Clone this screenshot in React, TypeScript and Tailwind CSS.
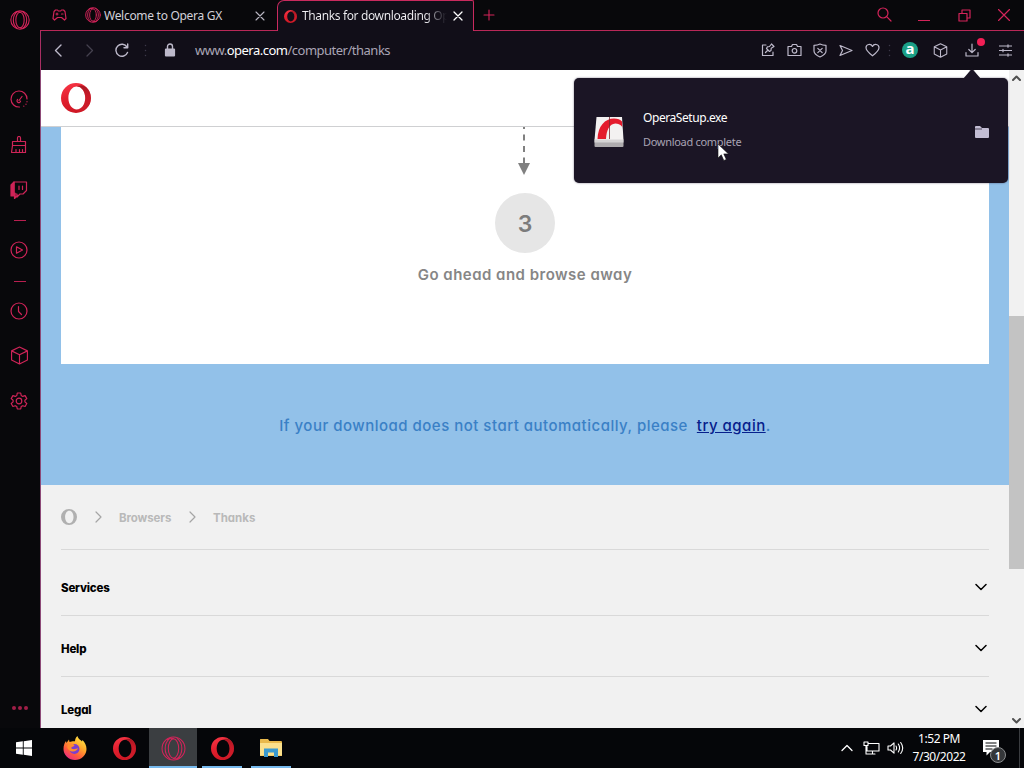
import React from "react";

type IconProps = { w?: number; h?: number; vb?: string; sw?: number; className?: string; children: React.ReactNode };

function Icon({ w = 18, h, vb, sw = 1.2, className = "", children }: IconProps) {
  const hh = h ?? w;
  return (
    <svg
      width={w}
      height={hh}
      viewBox={vb ?? `0 0 ${w} ${hh}`}
      fill="none"
      stroke="currentColor"
      strokeWidth={sw}
      strokeLinecap="round"
      strokeLinejoin="round"
      className={`block shrink-0 ${className}`}
    >
      {children}
    </svg>
  );
}

function Cell({ className, children }: { className: string; children?: React.ReactNode }) {
  return <div className={`flex shrink-0 items-center justify-center ${className}`}>{children}</div>;
}

function OperaLogo({ size, id }: { size: number; id: string }) {
  return (
    <svg width={size} height={size} viewBox="0 0 30 30" className="block shrink-0">
      <defs>
        <linearGradient id={id} x1="0" y1="0" x2="0.35" y2="1">
          <stop offset="0" stopColor="#fb3a4a" />
          <stop offset="0.5" stopColor="#e3202f" />
          <stop offset="1" stopColor="#cf1724" />
        </linearGradient>
        <linearGradient id={`${id}Shade`} x1="0" y1="0" x2="0" y2="1">
          <stop offset="0" stopColor="#8f1019" stopOpacity="0.75" />
          <stop offset="0.45" stopColor="#a81522" stopOpacity="0.35" />
          <stop offset="1" stopColor="#d42a38" stopOpacity="0.3" />
        </linearGradient>
      </defs>
      <path
        fillRule="evenodd"
        fill={`url(#${id})`}
        d="M15 0a15 15 0 1 0 0 30a15 15 0 1 0 0-30zM15.800 3.600c4.700 0 8.400 4.900 8.400 11.400s-3.700 11.400-8.400 11.400s-8.400-4.900-8.400-11.400s3.700-11.400 8.400-11.400z"
      />
      <path
        fill={`url(#${id}Shade)`}
        d="M15.800 3.600c2.500-1.900 6.300-1.400 9.200.4c6.700 6.300 6.700 16 0 22c-3 2-6.700 2.300-9.200.4c4.700 0 8.400-4.900 8.400-11.400s-3.700-11.400-8.400-11.400z"
      />
    </svg>
  );
}

function GxLogo({ size, sw = 1 }: { size: number; sw?: number }) {
  return (
    <Icon w={size} vb="0 0 24 24" sw={sw} className="text-[#d4245a]">
      <circle cx="12" cy="12" r="11" />
      <ellipse cx="12" cy="12" rx="5" ry="9.300" />
      <path d="M8.500 2.200C5.500 4.500 4 8 4 12s1.500 7.500 4.500 9.800M15.500 2.200C18.500 4.500 20 8 20 12s-1.500 7.500-4.500 9.800M12 2.700c-2-1-4-.8-6 .5M12 21.300c2 1 4 .8 6-.5" />
    </Icon>
  );
}

function Cube({ size, sw = 1.1 }: { size: number; sw?: number }) {
  return (
    <Icon w={size} vb="0 0 18 18" sw={sw}>
      <path d="M9 1l7.500 3.600v8.600L9 17l-7.500-3.800V4.600zM1.500 4.600L9 8.300l7.500-3.700M9 8.300V17" />
    </Icon>
  );
}

function Dots() {
  return (
    <Icon w={3} h={13} vb="0 0 3 13">
      <path d="M1.500 1.500v.1M1.500 6.500v.1M1.500 11.500v.1" stroke="#3c3849" strokeWidth="1.500" />
    </Icon>
  );
}

function Sidebar() {
  return (
    <aside className="flex w-10 shrink-0 flex-col items-stretch bg-[#08080b] pr-[2px] text-[#cf2458]">
      <Cell className="h-10 pl-px"><GxLogo size={20} sw={1.3} /></Cell>
      <Cell className="mt-[36px] h-[45px]">
        <Icon w={18}>
          <path d="M9.500 17A8 8 0 1 1 17 9M9 10.500l3-4M7.600 9.500a1.800 1.800 0 1 0 3 1.500M17 11.500v.3M16 14v.3M13.800 16v.2" />
        </Icon>
      </Cell>
      <Cell className="h-[47px]">
        <Icon w={18}>
          <path d="M2.500 5.500h13v4h-13zM2.500 9.500l-1 7h14l0-7M7.500 5.500v-3.500a1.500 1.500 0 0 1 3 0v3.500M6 16.500v-3M9.500 16.500v-3M12.500 16.500v-3" />
        </Icon>
      </Cell>
      <Cell className="h-[44px]">
        <Icon w={18}>
          <path d="M4 1L1 4v11h3.500v2.500L7 15H5V12H4z" fill="currentColor" />
          <path d="M4 1h12.500v8.500L13 13h-3l-3 3v-3H4zM9 5v3.500M12.500 5v3.500" />
        </Icon>
      </Cell>
      <Cell className="h-4 pl-px"><span className="h-px w-3 bg-[#b91f50]" /></Cell>
      <Cell className="h-[44px]">
        <Icon w={18}>
          <circle cx="9" cy="9" r="8" />
          <path d="M6.500 5.800v6.400l6-3.200z" />
        </Icon>
      </Cell>
      <Cell className="mt-px h-4 pl-px"><span className="h-px w-3 bg-[#b91f50]" /></Cell>
      <Cell className="h-[44px]">
        <Icon w={18}>
          <circle cx="9" cy="9" r="8" />
          <path d="M8.500 4.500v5l3 3" />
        </Icon>
      </Cell>
      <Cell className="h-[45px]"><Cube size={19} /></Cell>
      <Cell className="h-[46px]">
        <Icon w={18}>
          <circle cx="9" cy="9" r="2.800" />
          <path d="M7.300 1h3.400l.5 2.500 1.500.9 2.400-.8 1.700 3-1.900 1.600v1.700l1.900 1.600-1.700 3-2.400-.8-1.500.9-.5 2.400H7.300l-.5-2.400-1.500-.9-2.400.8-1.700-3 1.900-1.600V8.200L1.200 6.600l1.700-3 2.400.8 1.500-.9z" />
        </Icon>
      </Cell>
      <div className="mt-auto mb-[18px] flex justify-center gap-[2px] pl-px">
        <span className="size-1 rounded-full bg-[#a01e48]" />
        <span className="size-1 rounded-full bg-[#a01e48]" />
        <span className="size-1 rounded-full bg-[#a01e48]" />
      </div>
    </aside>
  );
}

function TabBar() {
  return (
    <div className="flex h-[31px] shrink-0 bg-[#08080b]">
      <div className="flex w-[237px] shrink-0 items-center border-b border-[#b92858] pt-px">
        <Cell className="w-[38px] pb-px">
          <Icon w={15} h={12} className="text-[#cf2458]">
            <path d="M3.500 1h2l.8 1h2.400l.8-1h2L13 2.500 14 9.500l-1.500 1.500-3-2.500h-4l-3 2.500L1 9.500 2 2.500zM4 5h2M5 4v2M9.500 5h1.500" />
          </Icon>
        </Cell>
        <Cell className="ml-[7px] w-4 pb-px"><GxLogo size={16} sw={1.4} /></Cell>
        <span className="ml-[3px] w-[146px] text-[12px] tracking-[-0.290px] whitespace-nowrap text-[#d2d0d8]">Welcome to Opera GX</span>
        <Cell className="w-5 text-[#b9b6c2]">
          <Icon w={10} sw={1.1}><path d="M1 1l8 8M9 1L1 9" /></Icon>
        </Cell>
      </div>
      <div className="flex w-[197px] shrink-0 items-center rounded-tl-[7px] rounded-tr-[2px] border-t border-r border-l border-[#c92a5e] bg-[#110e18] pl-[6px]">
        <OperaLogo size={13} id="tabLogo" />
        <span className="ml-[5px] w-[145px] bg-gradient-to-r from-[#f2f1f5] from-[85%] to-[#110e18] bg-clip-text text-[12px] tracking-[-0.370px] whitespace-nowrap text-transparent">
          Thanks for downloading Op
        </span>
        <Cell className="ml-[4px] w-[13px] text-white">
          <Icon w={10} sw={1.3}><path d="M1 1l8 8M9 1L1 9" /></Icon>
        </Cell>
      </div>
      <div className="flex min-w-0 flex-1 items-center border-b border-[#b92858] text-[#d4245a]">
        <Cell className="w-[29px]">
          <Icon w={12} sw={1.1}><path d="M6 1v10M1 6h10" /></Icon>
        </Cell>
        <div className="ml-auto flex">
          <Cell className="w-10 pb-[2px]"><Icon w={15}><circle cx="6" cy="6" r="5" /><path d="M9.700 9.700l4.300 4.300" /></Icon></Cell>
          <Cell className="w-10"><Icon w={12} h={14}><path d="M.5 12.500h11" /></Icon></Cell>
          <Cell className="w-10"><Icon w={13}><path d="M1 4.500h8v7.500H1zM4 4.500V1h8v8H9" /></Icon></Cell>
          <Cell className="w-10"><Icon w={12}><path d="M.5.5l11 11M11.500.5l-11 11" /></Icon></Cell>
        </div>
      </div>
    </div>
  );
}

function Toolbar() {
  return (
    <div className="flex h-[39px] shrink-0 items-center border-l border-[#a82e63] bg-[#110e18] pb-px text-[#bdb9ca]">
      <Cell className="w-[34px]"><Icon w={8} h={13} sw={1.4}><path d="M7 1L1.500 6.500 7 12" /></Icon></Cell>
      <Cell className="w-[30px] text-[#45414f]"><Icon w={8} h={13} sw={1.3}><path d="M1 1l5.500 5.500L1 12" /></Icon></Cell>
      <Cell className="w-[34px]"><Icon w={14} sw={1.4}><path d="M12.500 9.500A6 6 0 1 1 12 4M12.700 1v3.700H9" /></Icon></Cell>
      <Cell className="w-[12px]"><Dots /></Cell>
      <Cell className="w-[38px]">
        <Icon w={12} h={14}>
          <rect x="1.500" y="6" width="9" height="7" rx=".5" fill="currentColor" />
          <path d="M3.500 6V3.500a2.500 2.500 0 0 1 5 0V6" strokeWidth="1.400" />
        </Icon>
      </Cell>
      <span className="ml-[6px] pt-px text-[13px] tracking-[-0.500px] whitespace-nowrap text-[#a9a5b5]">
        www.<span className="text-white">opera.com</span>/computer/thanks
      </span>
      <div className="ml-auto flex items-center pr-[5px]">
        <Cell className="w-[26px]"><Icon w={14}><path d="M5 2H1.500v10.500H12V9M4.500 9.500L7 7M5.500 5.500l3 3 1.500-1 .2-2.300L13 3.500 10.500 1 8.500 3.500l-2.200.4z" /></Icon></Cell>
        <Cell className="w-[26px]"><Icon w={15} h={14}><path d="M1 3.500h3.500L5.500 1.500h4l1 2H14V12.500H1z" /><circle cx="7.500" cy="7.800" r="2.300" /></Icon></Cell>
        <Cell className="w-[26px]"><Icon w={14} h={15}><path d="M7 1c2 1 4 1.300 6 1.300V8c0 3-3 4.700-6 6-3-1.300-6-3-6-6V2.300C3 2.300 5 2 7 1zM4.800 5.300l4.400 4.400M9.200 5.300L4.800 9.700" /></Icon></Cell>
        <Cell className="w-[26px]"><Icon w={14} h={13}><path d="M1 1.500l12 5-12 5 2.500-5z" /></Icon></Cell>
        <Cell className="w-[26px]"><Icon w={15} h={14}><path d="M7.500 12.800C4 10 1 7.500 1 4.700 1 1 6 .3 7.500 3.500 9 .3 14 1 14 4.700c0 2.800-3 5.300-6.500 8.100z" /></Icon></Cell>
        <Cell className="w-2"><Dots /></Cell>
        <Cell className="w-[34px]">
          <span className="flex size-4 items-center justify-center rounded-full bg-[#1a9f86] pb-[3px] text-[15px] leading-none font-bold text-white">a</span>
        </Cell>
        <Cell className="w-[26px]"><Cube size={15} sw={1.3} /></Cell>
        <Cell className="relative h-5 w-[38px]">
          <Icon w={14}><path d="M7 1v8.500M3.800 6.500L7 9.700l3.200-3.200M1 9.500v3.500h12V9.500" /></Icon>
          <span className="absolute top-[-2px] left-[24px] size-2 rounded-full bg-[#f21f55]" />
        </Cell>
        <Cell className="w-7">
          <Icon w={13}><path d="M.5 2h12M.5 6.500h12M.5 11h12M9 .8v2.400M4 5.300v2.400M9 9.800v2.400" /></Icon>
        </Cell>
      </div>
    </div>
  );
}

function FooterRow({ label }: { label: string }) {
  return (
    <div className="flex h-[61px] shrink-0 items-center justify-between border-b border-[#d9d9d9] pt-[3px] pr-[2px]">
      <span className="pt-[4px] text-[11.5px] font-extrabold tracking-[-0.200px] text-black">{label}</span>
      <Icon w={12} h={8} sw={1.5} className="text-black"><path d="M1 1.500l5 5 5-5" /></Icon>
    </div>
  );
}

function Page() {
  return (
    <div className="flex min-w-0 flex-1 flex-col overflow-hidden bg-white font-['Inter','Lato',sans-serif] [font-feature-settings:'cv11']">
      <header className="flex h-[57px] shrink-0 items-center border-b border-[#cfd0d2] pl-5">
        <OperaLogo size={30} id="headLogo" />
      </header>
      <section className="flex h-[358px] shrink-0 flex-col items-center bg-[#92c1e9] px-5">
        <div className="flex h-[237px] w-full flex-col items-center bg-white">
          <svg width="14" height="48" viewBox="0 0 14 48" className="mr-[2px] block">
            <path d="M7 0v38" stroke="#808080" strokeWidth="2" strokeDasharray="6 5.500" strokeDashoffset="4" />
            <path d="M1 36h12L7 48z" fill="#808080" />
          </svg>
          <div className="mt-[18px] flex size-[60px] items-center justify-center rounded-full bg-[#e6e6e6] pt-[2px] text-[23px] font-semibold text-[#7c7c7c]">3</div>
          <p className="mt-[10px] text-[15px] leading-6 font-semibold tracking-[0.480px] whitespace-nowrap text-[#868686]">Go ahead and browse away</p>
        </div>
        <p className="mt-[50px] text-[15px] leading-6 font-medium tracking-[0.490px] whitespace-pre text-[#3a80c6]">
          {"If your download does not start automatically, please  "}
          <a className="text-[#06208c] underline">try again</a>.
        </p>
      </section>
      <footer className="flex flex-1 flex-col bg-[#f1f1f1] px-5">
        <nav className="flex h-[65px] shrink-0 items-center border-b border-[#d9d9d9] text-[11.500px] font-bold text-[#b9b9b9]">
          <svg width="16" height="16" viewBox="0 0 16 16" className="block">
            <path fill="#b0b0b0" fillRule="evenodd" d="M8 0a8 8 0 1 0 0 16A8 8 0 1 0 8 0zM8.300 1.800c2.400 0 4.200 2.700 4.200 6.200s-1.800 6.200-4.200 6.200S4.100 11.500 4.100 8 5.900 1.800 8.300 1.800z" />
          </svg>
          <Icon w={7} h={12} sw={1.2} className="ml-[18px] text-[#a5a5a5]"><path d="M1 1l5 5-5 5" /></Icon>
          <span className="ml-[17px] w-[53px] pt-[3px] tracking-[-0.100px] whitespace-nowrap">Browsers</span>
          <Icon w={7} h={12} sw={1.2} className="ml-[17px] text-[#a5a5a5]"><path d="M1 1l5 5-5 5" /></Icon>
          <span className="ml-[17px] pt-[3px] whitespace-nowrap">Thanks</span>
        </nav>
        <div className="flex flex-col pt-[5px]">
          <FooterRow label="Services" />
          <FooterRow label="Help" />
          <FooterRow label="Legal" />
        </div>
      </footer>
    </div>
  );
}

function Scrollbar() {
  return (
    <div className="flex w-[15px] shrink-0 flex-col bg-[#f1f1f1] text-[#505050]">
      <Cell className="h-[15px]"><Icon w={9} h={6} sw={2}><path d="M1 5l3.500-3.500L8 5" /></Icon></Cell>
      <div className="mt-[231px] h-[253px] bg-[#c3c3c3]" />
      <Cell className="mt-auto h-[15px]"><Icon w={9} h={6} sw={2}><path d="M1 1l3.500 3.500L8 1" /></Icon></Cell>
    </div>
  );
}

function DownloadPopup() {
  return (
    <div className="absolute top-[78px] left-[574px] flex h-[105px] w-[434px] items-center rounded-[5px] bg-[#1b1525] pl-5 shadow-[0_0_2px_rgba(20,10,40,0.6)]">
      <svg width="18" height="10" viewBox="0 0 18 10" className="absolute top-[-9px] left-[389px]">
        <path d="M0 10L7.500 1.200Q9 0 10.500 1.200L18 10z" fill="#1b1525" />
      </svg>
      <svg width="30" height="32" viewBox="0 0 30 32" className="mt-[2px] block shrink-0">
        <path d="M2.500 1h25.500L29.500 24H.5z" fill="#f3f1f1" />
        <path d="M.5 24h29v6q0 1-1 1H1.500q-1 0-1-1z" fill="#aeabae" />
        <path d="M.5 23.500h29v3H.5z" fill="#d5d3d4" />
        <path d="M3.500 23C4 10 11 2.500 20 2.500c3.500 0 6.500 1 8 3l.3 5.500c-2-3-4.500-3.500-7-3.500C15.500 8 12.500 14 12 23z" fill="#e41b2d" />
        <path d="M15.500 1v22" stroke="#7c2830" strokeWidth=".8" />
      </svg>
      <div className="ml-[19px] flex flex-col pb-[2px] whitespace-nowrap">
        <span className="text-[12px] leading-6 tracking-[-0.430px] text-white">OperaSetup.exe</span>
        <span className="text-[11px] leading-6 tracking-[-0.300px] text-[#a8a3b4]">Download complete</span>
      </div>
      <svg width="14" height="12" viewBox="0 0 14 12" className="mt-[2px] mr-[19px] ml-auto block">
        <path d="M0 1q0-1 1-1h4l2 2h6q1 0 1 1v8q0 1-1 1H1q-1 0-1-1z" fill="#c3bdd4" />
        <path d="M0 3h7" stroke="#1b1525" strokeWidth=".7" />
      </svg>
      <svg width="13" height="19" viewBox="0 0 13 19" className="absolute top-[65px] left-[143px]">
        <path d="M1 1v14l3.300-3.200 2.500 5.700 2.500-1.100-2.500-5.500h4.700z" fill="#fff" stroke="#111" strokeWidth=".6" />
      </svg>
    </div>
  );
}

function Taskbar() {
  return (
    <div className="flex h-10 shrink-0 bg-[#050609] text-white">
      <Cell className="w-[50px]">
        <svg width="16" height="16" viewBox="0 0 16 16" fill="#fff" className="mr-[2px] block">
          <path d="M0 2.300L6.800 1.300v6.200H0zM7.700 1.200L16 0v7.500H7.700zM0 8.400h6.800v6.300L0 13.700zM7.700 8.400H16V16l-8.300-1.200z" />
        </svg>
      </Cell>
      <Cell className="w-[49px]">
        <svg width="24" height="24" viewBox="0 0 24 24" className="block">
          <defs>
            <linearGradient id="fox" x1="0.85" y1="0" x2="0.2" y2="1">
              <stop offset="0" stopColor="#fff04a" />
              <stop offset="0.400" stopColor="#ffa62a" />
              <stop offset="0.700" stopColor="#ff5a3c" />
              <stop offset="1" stopColor="#e8248c" />
            </linearGradient>
          </defs>
          <path d="M14.500 0c.5 3 3 3.500 4.500 5.500l.5-1.500c2.500 2.500 4 5.500 4 9a11.500 11 0 0 1-23 0c0-3.500 1-6 2.500-8l.5 2L6 3.500l.5 2.500c2-1 4-.8 5.500-.8 0-2 1-4 2.500-5.200z" fill="url(#fox)" />
          <circle cx="11.500" cy="13" r="5" fill="#7a3fd0" />
          <path d="M5 8.500c3-2 5-.5 6.500.5 0 1.500-2.500 1.500-3.500 3 2 2 5 1 7 0-1 4-7 5-10 1-1-1.500-.8-3 0-4.500z" fill="#ff8c2e" />
        </svg>
      </Cell>
      <Cell className="w-[50px]"><OperaLogo size={23} id="task1" /></Cell>
      <Cell className="w-12 border-b-2 border-[#76b9ed] bg-[#3b3e41] pt-[2px]"><GxLogo size={25} /></Cell>
      <Cell className="ml-[5px] w-10 border-b-2 border-[#76b9ed] pt-[2px]"><OperaLogo size={23} id="task2" /></Cell>
      <Cell className="ml-[9px] w-10 border-b-2 border-[#76b9ed] pt-[2px]">
        <svg width="22" height="20" viewBox="0 0 22 20" className="block">
          <path d="M0 1.500Q0 1 .5 1H8l1.500 2H21q1 0 1 1v14H0z" fill="#e9b94c" />
          <path d="M0 5h22v12.500H0z" fill="#fbe08c" />
          <path d="M4 10.500h14V19h-4v-4.500H8V19H4z" fill="#3b9ad0" />
        </svg>
      </Cell>
      <div className="ml-auto flex">
        <Cell className="w-6"><Icon w={12} h={8} sw={1.3}><path d="M1 6.500l5-5 5 5" /></Icon></Cell>
        <Cell className="w-6">
          <Icon w={17} h={14} sw={1.1}><path d="M5 2.500h11V10H4V5.500M1 1h4v3.500H1zM3 4.500v8M9.500 10v3M3 13h9" /></Icon>
        </Cell>
        <Cell className="w-6">
          <Icon w={17} h={14} sw={1.1}><path d="M1 5h2.500L7 1.800v10.400L3.500 9H1zM9 5q1.200 2 0 4M11.300 3q2.600 4 0 8M13.700 1.500q4 5.500 0 11" /></Icon>
        </Cell>
        <div className="flex w-16 flex-col items-center justify-center text-[12px] leading-[18px] tracking-[-0.450px] whitespace-nowrap">
          <span>1:52 PM</span>
          <span>7/30/2022</span>
        </div>
        <Cell className="relative w-[40px]">
          <svg width="16" height="16" viewBox="0 0 16 16" className="block">
            <path d="M0 0h16v12H7l-3.500 3.500V12H0z" fill="#fff" />
            <path d="M2.500 3h11M2.500 6h11M2.500 9h7" stroke="#050609" strokeWidth="1" />
          </svg>
          <span className="absolute top-[19px] left-[19px] flex size-4 items-center justify-center rounded-full border border-[#8a8c8e] bg-[#35373a] text-[11px] leading-none font-semibold">1</span>
        </Cell>
        <div className="ml-[8px] w-[5px] border-l border-[#3a3c40]" />
      </div>
    </div>
  );
}

export default function App() {
  return (
    <div className="relative flex h-[768px] w-[1024px] flex-col overflow-hidden bg-[#08080b] font-['Noto_Sans','Open_Sans',sans-serif]">
      <div className="flex h-[728px] shrink-0">
        <Sidebar />
        <div className="flex min-w-0 flex-1 flex-col">
          <TabBar />
          <Toolbar />
          <div className="flex min-h-0 flex-1 border-l border-[#8d4a78]">
            <Page />
            <Scrollbar />
          </div>
        </div>
      </div>
      <Taskbar />
      <DownloadPopup />
    </div>
  );
}
